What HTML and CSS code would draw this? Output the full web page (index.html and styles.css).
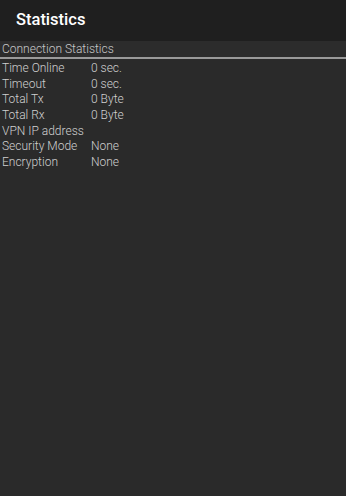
FILE: index.html
```html
<!DOCTYPE html>
<html lang="en">

<head>
    <title>Statistics</title>

    <link rel="stylesheet" href="styles.css">

</head>

<body>

    <div class="screen">

        <div class="toolbar">
            <h1 class="title">Statistics</h1>
        </div>

        <div class="section">Connection Statistics</div>

        <div class="stats">
            <div class="row"><span class="label">Time Online</span><span class="value">0 sec.</span></div>
            <div class="row"><span class="label">Timeout</span><span class="value">0 sec.</span></div>
            <div class="row"><span class="label">Total Tx</span><span class="value">0 Byte</span></div>
            <div class="row"><span class="label">Total Rx</span><span class="value">0 Byte</span></div>
            <div class="row"><span class="label">VPN IP address</span><span class="value"></span></div>
            <div class="row"><span class="label">Security Mode</span><span class="value">None</span></div>
            <div class="row"><span class="label">Encryption</span><span class="value">None</span></div>
        </div>

    </div>

</body>

</html>
```

FILE: styles.css
```css
* {
    padding: 0;
    margin: 0;
    box-sizing: border-box;
}

body {
    width: 346px;
    height: 496px;
    background-color: #2a2a2a;
    font-family: Roboto, "Noto Sans", sans-serif;
    overflow: hidden;
}

.screen {
    display: flex;
    flex-direction: column;
    height: 100%;
}

.toolbar {
    height: 41px;
    background-color: #1f1f1f;
    display: flex;
    align-items: center;
    padding: 0 0 2px 16px;
}

.title {
    font-size: 16.5px;
    font-weight: 500;
    color: #ffffff;
}

.section {
    height: 18px;
    padding: 1px 0 0 2px;
    font-size: 12px;
    font-weight: 300;
    color: #c8c8c8;
    background-color: #2c2c2c;
    border-bottom: 2px solid #9a9a9a;
}

.stats {
    padding-top: 1px;
}

.row {
    display: flex;
    height: 15.7px;
    align-items: center;
    font-size: 12px;
    font-weight: 300;
    color: #d0d0d0;
}

.label {
    width: 91px;
    padding-left: 2px;
}
```
